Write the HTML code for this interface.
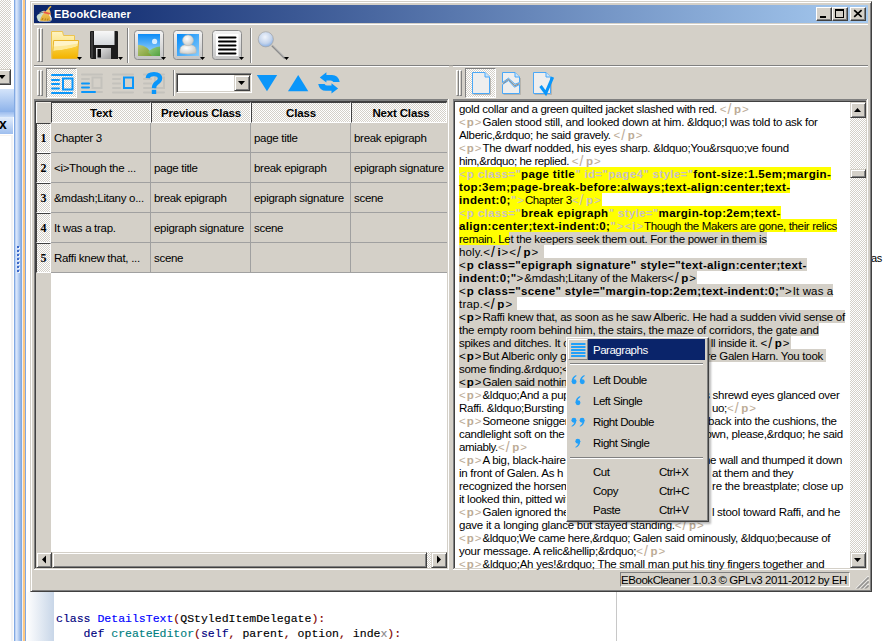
<!DOCTYPE html>
<html><head><meta charset="utf-8">
<style>
*{box-sizing:border-box}
html,body{margin:0;padding:0;background:#fff}
#root{position:relative;width:883px;height:641px;overflow:hidden;background:#fff;font-family:"Liberation Sans",sans-serif;font-size:11px;color:#000}
.a{position:absolute}
.bg{background:#d4d0c8}
.dith{background:repeating-conic-gradient(#d4d0c8 0 25%,#fff 0 50%) 0 0/2px 2px}
.rz{border-style:solid;border-width:1px;border-color:#fff #404040 #404040 #fff;box-shadow:inset -1px -1px 0 #808080;background:#d4d0c8}
.rz2{border-style:solid;border-width:1px;border-color:#d4d0c8 #404040 #404040 #d4d0c8;box-shadow:inset 1px 1px 0 #fff,inset -1px -1px 0 #808080;background:#d4d0c8}
.snk{border-style:solid;border-width:1px;border-color:#808080 #fff #fff #808080;box-shadow:inset 1px 1px 0 #404040,inset -1px -1px 0 #d4d0c8}
.hnd{width:3px;border-style:solid;border-width:1px;border-color:#fff #808080 #808080 #fff}
.sepv{width:2px;border-left:1px solid #808080;border-right:1px solid #fff}
.tx{white-space:pre;line-height:13px;font-size:11.5px}
.sn,.sb,.sw,.swb,.sy,.syb,.sg,.sgb{}
.sb,.swb,.syb,.sgb{font-weight:bold}
.sw,.swb{color:#bcab96}
.sy,.syb{color:#c8c0c8}
.tx{height:13px}
.te{font-size:11.5px}
</style></head><body>
<div id="root">

<!-- ============ LEFT STRIP (behind) ============ -->
<div class="a dith" style="left:0;top:0;width:11px;height:69px"></div>
<div class="a" style="left:0;top:69px;width:11px;height:16px;border-style:solid;border-width:1px 1px 1px 0;border-color:#d4d0c8 #404040 #404040 #d4d0c8;box-shadow:inset 0 1px 0 #fff,inset -1px -1px 0 #808080;background:#d4d0c8"></div>
<svg class="a" style="left:0;top:74px" width="8" height="6"><path d="M-1.5 1H5.5L2 5Z" fill="#000"/></svg>
<div class="a" style="left:0;top:89px;width:15px;height:23px;background:linear-gradient(#d4e4fa,#8cb2ea)"></div>
<div class="a" style="left:0;top:112px;width:15px;height:5px;background:linear-gradient(#9cbcee,#c8dcf8)"></div>
<div class="a" style="left:0;top:117px;width:14px;height:17px;background:linear-gradient(#e4eefc,#9ebeee);border-right:1px solid #fff"></div>
<div class="a" style="left:-1px;top:116px;font-weight:bold;font-size:14px;line-height:16px">x</div>
<div class="a" style="left:11px;top:136px;width:2px;height:505px;background:#f3f3f3"></div><div class="a" style="left:0;top:135px;width:13px;height:1px;background:#f8f4f0"></div>
<!-- blue vertical bar -->
<div class="a" style="left:14px;top:0;width:8px;height:641px;background:linear-gradient(90deg,#80a8e2 0,#80a8e2 6%,#dce8fc 25%,#d0e0f8 40%,#80a8e2 94%)"></div><div class="a" style="left:22px;top:0;width:1px;height:641px;background:#f4f0ec"></div>
<div class="a" style="left:23px;top:0;width:2px;height:641px;background:#fcc884"></div>
<div class="a" style="left:25px;top:0;width:1px;height:641px;background:#80a8e2"></div>
<!-- grip dots -->
<div class="a" style="left:17px;top:246px;width:2px;height:2px;background:#3c68c8;box-shadow:1px 1px 0 #f0f4fc"></div><div class="a" style="left:17px;top:250px;width:2px;height:2px;background:#3c68c8;box-shadow:1px 1px 0 #f0f4fc"></div><div class="a" style="left:17px;top:254px;width:2px;height:2px;background:#3c68c8;box-shadow:1px 1px 0 #f0f4fc"></div><div class="a" style="left:17px;top:258px;width:2px;height:2px;background:#3c68c8;box-shadow:1px 1px 0 #f0f4fc"></div><div class="a" style="left:17px;top:262px;width:2px;height:2px;background:#3c68c8;box-shadow:1px 1px 0 #f0f4fc"></div><div class="a" style="left:17px;top:266px;width:2px;height:2px;background:#3c68c8;box-shadow:1px 1px 0 #f0f4fc"></div><div class="a" style="left:17px;top:270px;width:2px;height:2px;background:#3c68c8;box-shadow:1px 1px 0 #f0f4fc"></div>
<!-- bottom gradient under window -->
<div class="a" style="left:26px;top:592px;width:28px;height:49px;background:linear-gradient(90deg,#fff,#c8d6e8)"></div>
<div class="a" style="left:616px;top:592px;width:1px;height:49px;background:#c8c8c8"></div>

<!-- code -->
<div class="a" style="left:56px;top:611px;font-family:'Liberation Mono',monospace;font-size:11.5px;line-height:15px;white-space:pre;-webkit-text-stroke:0.15px currentColor"><span style="color:#000080">class</span> <span style="color:#0000ff">DetailsText</span><span style="color:#800000">(</span>QStyledItemDelegate<span style="color:#800000">):</span>
    <span style="color:#000080">def</span> <span style="color:#008080">createEditor</span><span style="color:#800000">(</span><span style="color:#000080">self</span><span style="color:#800000">,</span> parent<span style="color:#800000">,</span> option<span style="color:#800000">,</span> inde<span style="color:#888">x</span><span style="color:#800000">):</span></div>
<div class="a" style="left:871px;top:252px;font-size:11px;line-height:13px;letter-spacing:-0.3px">as</div>

<!-- ============ WINDOW ============ -->
<div id="win" class="a" style="left:30px;top:1px;width:842px;height:591px;background:#d4d0c8;border-style:solid;border-width:1px;border-color:#d4d0c8 #404040 #404040 #d4d0c8;box-shadow:inset 1px 1px 0 #fff,inset -1px -1px 0 #808080"></div>

<!-- title bar -->
<div class="a" style="left:34px;top:5px;width:834px;height:18px;background:linear-gradient(90deg,#0a246a,#a6caf0)"></div>
<div class="a" style="left:54px;top:5px;color:#fff;font-weight:bold;font-size:11px;line-height:19px;letter-spacing:0.15px">EBookCleaner</div>
<!-- TITLEICON -->
<svg class="a" style="left:34px;top:4px" width="20" height="20"><defs><linearGradient id="brm" x1="0" y1="0" x2="0" y2="1"><stop offset="0" stop-color="#f4d27a"/><stop offset="1" stop-color="#e0a628"/></linearGradient></defs>
<path d="M3 14C2 12 4 10 6 9.5C7 7.5 9 6.5 11 7L10 17H4Z" fill="#c8dcd0"/>
<path d="M5.5 9.5C6.5 8.5 8 8 9 8.5" stroke="#788880" stroke-width="1.2" fill="none"/>
<path d="M14.5 4.5C12 6.5 8.5 10 7 13.5L6 16.5C7.5 17.5 8.5 17 9.5 17.5C12 17.5 15 17 17 16.5L16.5 9C16.5 7 15.5 5.5 14.5 4.5Z" fill="url(#brm)"/>
<path d="M9.5 8.2L16.5 10" stroke="#e85848" stroke-width="1.8"/>
<path d="M14.2 5L17 2.2" stroke="#e0b040" stroke-width="1.6"/>
<path d="M15.5 10.5C16.5 12 17.5 14 17 16.5" stroke="#f0f4f8" stroke-width="1.2" fill="none"/>
<path d="M5 17.3H16.5" stroke="#c8d0e0" stroke-width="0.8"/>
<path d="M8 16L9 14M11 16.5L11.5 14.5M13.5 16.5L14 14.5" stroke="#a07018" stroke-width="0.8"/>
</svg>
<!-- title buttons -->
<div class="a rz" style="left:816px;top:7px;width:16px;height:14px"></div>
<div class="a" style="left:820px;top:16px;width:6px;height:2px;background:#000"></div>
<div class="a rz" style="left:832px;top:7px;width:16px;height:14px"></div>
<div class="a" style="left:835px;top:9px;width:9px;height:9px;border:1px solid #000;border-top-width:2px"></div>
<div class="a rz" style="left:850px;top:7px;width:16px;height:14px"></div>
<svg class="a" style="left:850px;top:7px" width="16" height="14"><path d="M4.2 3.2L11.6 9.9M11.6 3.2L4.2 9.9" stroke="#000" stroke-width="1.7"/></svg>

<!-- toolbar area -->
<div class="a" style="left:34px;top:24px;width:834px;height:1px;background:#fff"></div>
<div class="a" style="left:34px;top:65px;width:834px;height:1px;background:#808080"></div>
<div class="a" style="left:34px;top:66px;width:834px;height:1px;background:#fff"></div><div class="a" style="left:449px;top:66px;width:4px;height:1px;background:#d4d0c8"></div><div class="a" style="left:449px;top:65px;width:4px;height:1px;background:#9c9a96"></div>

<!-- TOOLBAR1 -->
<div class="a hnd" style="left:37px;top:28px;height:34px"></div>
<div class="a hnd" style="left:40px;top:28px;height:34px"></div>
<div class="a sepv" style="left:127px;top:28px;height:35px"></div>
<div class="a sepv" style="left:250px;top:28px;height:35px"></div>
<svg class="a" style="left:0;top:0" width="300" height="66">
<defs>
<linearGradient id="fb" x1="0" y1="0" x2="0" y2="1"><stop offset="0" stop-color="#fff4c0"/><stop offset="1" stop-color="#f6d24a"/></linearGradient>
<linearGradient id="ff" x1="0" y1="0" x2="0" y2="1"><stop offset="0" stop-color="#fff6c8"/><stop offset="0.45" stop-color="#fbe07a"/><stop offset="0.5" stop-color="#f8cc30"/><stop offset="1" stop-color="#f6b60a"/></linearGradient>
<linearGradient id="ff2" x1="0" y1="0" x2="0" y2="1"><stop offset="0" stop-color="#fad040"/><stop offset="1" stop-color="#f4b400"/></linearGradient>
<linearGradient id="fl" x1="0" y1="0" x2="0" y2="1"><stop offset="0" stop-color="#f8f8f8"/><stop offset="1" stop-color="#d4d8dc"/></linearGradient>
<linearGradient id="sh" x1="0" y1="0" x2="1" y2="1"><stop offset="0" stop-color="#e8e8e8"/><stop offset="1" stop-color="#9c9c9c"/></linearGradient>
<linearGradient id="fr" x1="0" y1="0" x2="0" y2="1"><stop offset="0" stop-color="#f4f4f4"/><stop offset="1" stop-color="#c4c4c4"/></linearGradient>
<linearGradient id="sky" x1="0" y1="0" x2="0" y2="1"><stop offset="0" stop-color="#0a8cf8"/><stop offset="1" stop-color="#b4dcf8"/></linearGradient>
<linearGradient id="hill1" x1="0" y1="0" x2="1" y2="1"><stop offset="0" stop-color="#b8c878"/><stop offset="1" stop-color="#789c30"/></linearGradient>
<linearGradient id="hill2" x1="0" y1="0" x2="1" y2="1"><stop offset="0" stop-color="#9cd080"/><stop offset="1" stop-color="#50a040"/></linearGradient>
<linearGradient id="pbl" x1="0" y1="0" x2="1" y2="1"><stop offset="0" stop-color="#0088f8"/><stop offset="1" stop-color="#88ccfc"/></linearGradient>
<radialGradient id="hd" cx="0.4" cy="0.35" r="0.7"><stop offset="0" stop-color="#ffffff"/><stop offset="1" stop-color="#c8c8c4"/></radialGradient>
<radialGradient id="lens" cx="0.45" cy="0.35" r="0.7"><stop offset="0" stop-color="#f0f4fc"/><stop offset="0.6" stop-color="#c4d4ec"/><stop offset="1" stop-color="#7ca8e4"/></radialGradient>
</defs>
<!-- folder -->
<path d="M51.5 31.5H62.5L63.5 35.5H74.5V41H54L52.5 58.5H51.5Z" fill="url(#fb)" stroke="#ecc450"/>
<path d="M53.8 40.5H78.5L77.5 58.5H52.5Z" fill="#f8c21c" stroke="#eab42a"/>
<path d="M54.3 41H78L77.6 46C72 48.5 62 50 53.4 51Z" fill="#fde99a"/>
<path d="M54.3 41H78L77.8 43.5C70 45 62 46 53.7 46.5Z" fill="#fff4c8"/>
<path d="M53 51C62 50 72 48.5 77.6 46L77.5 58H53Z" fill="url(#ff2)"/>
<path d="M77 57H82L79.5 60Z" fill="#000"/>
<!-- floppy -->
<path d="M90 31.5Q90 31 91 31H117Q118 31 118 32V59H92Q90 59 90 57Z" fill="#1c1c1c"/>
<rect x="91" y="32" width="2" height="26" fill="#3a3a3a"/>
<rect x="94" y="31" width="20.5" height="14" fill="url(#fl)"/>
<rect x="96" y="48" width="15" height="11" fill="url(#sh)"/>
<rect x="97.5" y="49" width="3.5" height="8.5" fill="#0c0c0c"/>
<path d="M118 57H123L120.5 60Z" fill="#000"/>
<!-- picture -->
<rect x="134.5" y="30.5" width="29" height="29" rx="3" fill="url(#fr)" stroke="#8c8c8c"/>
<rect x="138" y="34" width="22" height="22" fill="url(#sky)"/>
<circle cx="154.6" cy="41.4" r="2.6" fill="#d8ecfc"/>
<path d="M138 45Q147 44 153 56H138Z" fill="url(#hill1)"/>
<path d="M148 52Q153 47 160 46.5V56H152Z" fill="url(#hill2)"/>
<path d="M161 57H166L163.5 60Z" fill="#000"/>
<!-- person -->
<rect x="173.5" y="30.5" width="29" height="29" rx="3" fill="url(#fr)" stroke="#8c8c8c"/>
<rect x="177" y="34" width="22" height="22" fill="url(#pbl)"/>
<path d="M180 53Q179 46 184 45H192Q197 46 196 53Q188 55 180 53Z" fill="url(#hd)" stroke="#b8b8b4" stroke-width="0.6"/>
<circle cx="188" cy="40.3" r="5.4" fill="url(#hd)" stroke="#bcbcb8" stroke-width="0.6"/>
<path d="M200 57H205L202.5 60Z" fill="#000"/>
<!-- list -->
<rect x="212.5" y="30.5" width="29" height="29" rx="3" fill="url(#fr)" stroke="#8c8c8c"/>
<rect x="216" y="34" width="22.5" height="22" fill="#fff"/>
<g stroke="#000" stroke-width="2" stroke-linecap="round"><path d="M219 37.5H235.5M219 41.5H235.5M219 45.5H235.5M219 49.5H235.5M219 53.5H235.5"/></g>
<path d="M239 57H244L241.5 60Z" fill="#000"/>
<!-- magnifier -->
<path d="M272 45.5L285 58.5" stroke="#8c8c8c" stroke-width="2"/><path d="M272.5 45L285.5 58" stroke="#e0e0e0" stroke-width="0.7"/>
<circle cx="265.8" cy="39.3" r="7.6" fill="url(#lens)" stroke="#a8a8a8" stroke-width="0.8"/>
<path d="M284 57H289L286.5 60Z" fill="#000"/>
</svg>
<!-- TOOLBAR2 -->
<div class="a hnd" style="left:37px;top:70px;height:26px"></div>
<div class="a hnd" style="left:40px;top:70px;height:26px"></div>
<div class="a dith" style="left:46px;top:68px;width:31px;height:30px;border-style:solid;border-width:1px;border-color:#808080 #fff #fff #808080"></div>
<div class="a sepv" style="left:173px;top:70px;height:26px"></div>
<div class="a snk" style="left:176px;top:73px;width:76px;height:20px;background:#fff"></div>
<div class="a rz2" style="left:234px;top:75px;width:16px;height:16px"></div>
<svg class="a" style="left:238px;top:81px" width="8" height="5"><path d="M0 0H7L3.5 4Z" fill="#000"/></svg>
<div class="a hnd" style="left:456px;top:70px;height:26px"></div>
<div class="a hnd" style="left:459px;top:70px;height:26px"></div>
<div class="a dith" style="left:465px;top:68px;width:31px;height:30px;border-style:solid;border-width:1px;border-color:#808080 #fff #fff #808080"></div>
<svg class="a" style="left:0;top:0" width="600" height="100">
<g stroke-linecap="round" stroke-width="2" fill="none">
<!-- icon1 -->
<g stroke="#0a96fa"><path d="M52 75H72M52 80H59M52 84H59M52 88.5H59M52 93H72"/><rect x="63" y="78.5" width="9.5" height="11"/></g>
<!-- icon2 -->
<g stroke="#c4c2bc"><path d="M82 74.5H102M82 79H89M95 92H102"/><rect x="92.5" y="77.5" width="9" height="10.5"/></g>
<g stroke="#0a96fa"><path d="M82 83.5H89M82 87.5H89M82 92H95"/></g>
<!-- icon3 -->
<g stroke="#c4c2bc"><path d="M113 74.5H133M113 79H120M113 83.5H120M113 88H120M113 92.5H133"/></g>
<g stroke="#0a96fa"><rect x="124" y="77.5" width="9" height="10.5"/></g>
<!-- icon4 -->
<g stroke="#c4c2bc"><path d="M144 74.5H164M144 79H151M144 83.5H151M144 88H151M144 92.5H164"/><rect x="155" y="77.5" width="9" height="10.5"/></g>
</g>
<path d="M147.8 78.2C148 75 150.5 74.1 154 74.1C158 74.1 160 76 160 78.6C160 81 158.3 82 156.6 83.1C154.6 84.4 154 85.5 154 88.3" stroke="#0a96fa" stroke-width="4.4" fill="none"/><rect x="151.8" y="89.8" width="4.4" height="4.2" fill="#0a96fa"/>
<!-- arrows -->
<path d="M256.8 75H277.2L267 91.2Z" fill="#0a96fa"/>
<path d="M288 91.2H308.3L298.2 75Z" fill="#0a96fa"/>
<g fill="#0a96fa">
<path d="M319.8 77.4L326.4 72.2V75H332Q338.2 75 339.7 81.9H333.3Q332.5 80.4 330.8 80.4H326.4V82.5Z"/>
<path transform="rotate(180 328.95 82.9)" d="M319.8 77.4L326.4 72.2V75H332Q338.2 75 339.7 81.9H333.3Q332.5 80.4 330.8 80.4H326.4V82.5Z"/>
</g>
<!-- docs -->
<g stroke="#4aa8f8" stroke-width="1">
<path d="M472.5 72.5H485L489.5 77V93.5H472.5Z" fill="#eeeeee"/>
<path d="M485 72.5V77H489.5" fill="#c8e4fc"/>
<path d="M502.5 82.5V72.5H515L519.5 77V82.5L515 84.2L508.5 78.2Z" fill="#eeeeee"/>
<path d="M515 72.5V77H519.5" fill="#c8e4fc"/>
<path d="M502.5 84.5L508.5 80.5L514.5 87.2L519.5 84.5V93.5H502.5Z" fill="#eeeeee"/>
<path d="M533.5 72.5H546L550.5 77V93.5H533.5Z" fill="#eeeeee"/>
<path d="M546 72.5V77H550.5" fill="#c8e4fc"/>
</g>
<path d="M503 83.5L508.5 79.4L514.8 85.8L519.5 83.5" stroke="#808080" stroke-width="0.8" fill="none"/>
<path d="M490.5 78V94.5H473.5M520.5 78V94.5H503.5M551.5 78V94.5H534.5" stroke="#b0aca4" stroke-width="0.8" fill="none"/>
<path d="M540.5 86L545.8 93.2L552.7 77.2" stroke="#0a96fa" stroke-width="3" fill="none"/>
</svg>
<!-- TABLE -->
<!-- table frame -->
<div class="a" style="left:34px;top:99px;width:415px;height:1px;background:#808080"></div>
<div class="a" style="left:34px;top:100px;width:414px;height:1px;background:#808080"></div>
<div class="a" style="left:35px;top:101px;width:412px;height:1px;background:#404040"></div>
<div class="a" style="left:34px;top:99px;width:1px;height:471px;background:#808080"></div>
<div class="a" style="left:35px;top:101px;width:1px;height:467px;background:#404040"></div>
<div class="a" style="left:35px;top:568px;width:413px;height:1px;background:#d4d0c8"></div>
<div class="a" style="left:34px;top:569px;width:415px;height:1px;background:#fff"></div>
<div class="a" style="left:447px;top:100px;width:1px;height:469px;background:#d4d0c8"></div>
<div class="a" style="left:448px;top:99px;width:1px;height:471px;background:#fff"></div>
<div class="a" style="left:36px;top:102px;width:411px;height:450px;background:#fff"></div>
<div class="a" style="left:36px;top:273px;width:15px;height:279px;background:#d4d0c8"></div>
<div class="a" style="left:36px;top:102px;width:15px;height:21px;background:#d4d0c8;border-left:1px solid #fff;border-top:1px solid #f0ece6"></div>
<div class="a dith" style="left:51px;top:102px;width:100px;height:21px;border-style:solid;border-width:1px;border-color:#404040 #fff #fff #404040"></div>
<div class="a" style="left:51px;top:107px;width:100px;text-align:center;font-weight:bold;line-height:13px;font-size:11.5px;letter-spacing:-0.16px">Text</div>
<div class="a dith" style="left:151px;top:102px;width:100px;height:21px;border-style:solid;border-width:1px;border-color:#404040 #fff #fff #404040"></div>
<div class="a" style="left:151px;top:107px;width:100px;text-align:center;font-weight:bold;line-height:13px;font-size:11.5px;letter-spacing:-0.16px">Previous Class</div>
<div class="a dith" style="left:251px;top:102px;width:100px;height:21px;border-style:solid;border-width:1px;border-color:#404040 #fff #fff #404040"></div>
<div class="a" style="left:251px;top:107px;width:100px;text-align:center;font-weight:bold;line-height:13px;font-size:11.5px;letter-spacing:-0.16px">Class</div>
<div class="a dith" style="left:351px;top:102px;width:96px;height:21px;border-style:solid;border-width:1px;border-color:#404040 #fff #fff #404040"></div>
<div class="a" style="left:351px;top:107px;width:100px;text-align:center;font-weight:bold;line-height:13px;font-size:11.5px;letter-spacing:-0.16px">Next Class</div>
<div class="a dith" style="left:36px;top:123px;width:15px;height:30px;border-style:solid;border-width:1px;border-color:#404040 #fff #fff #404040"></div>
<div class="a" style="left:37px;top:132px;width:13px;text-align:center;font-weight:bold;font-family:'Liberation Serif';font-size:12px;line-height:13px">1</div>
<div class="a" style="left:51px;top:123px;width:396px;height:29px;background:#d4d0c8"></div>
<div class="a" style="left:51px;top:152px;width:396px;height:1px;background:#a0a0a0"></div>
<div class="a" style="left:150px;top:123px;width:1px;height:30px;background:#a0a0a0"></div>
<div class="a tx" style="left:54px;top:132px;letter-spacing:-0.3px">Chapter 3</div>
<div class="a" style="left:250px;top:123px;width:1px;height:30px;background:#a0a0a0"></div>
<div class="a" style="left:350px;top:123px;width:1px;height:30px;background:#a0a0a0"></div>
<div class="a tx" style="left:254px;top:132px;letter-spacing:-0.3px">page title</div>
<div class="a tx" style="left:354px;top:132px;letter-spacing:-0.3px">break epigraph</div>
<div class="a dith" style="left:36px;top:153px;width:15px;height:30px;border-style:solid;border-width:1px;border-color:#404040 #fff #fff #404040"></div>
<div class="a" style="left:37px;top:162px;width:13px;text-align:center;font-weight:bold;font-family:'Liberation Serif';font-size:12px;line-height:13px">2</div>
<div class="a" style="left:51px;top:153px;width:396px;height:29px;background:#d4d0c8"></div>
<div class="a" style="left:51px;top:182px;width:396px;height:1px;background:#a0a0a0"></div>
<div class="a" style="left:150px;top:153px;width:1px;height:30px;background:#a0a0a0"></div>
<div class="a tx" style="left:54px;top:162px;letter-spacing:-0.3px">&lt;i&gt;Though the ...</div>
<div class="a" style="left:250px;top:153px;width:1px;height:30px;background:#a0a0a0"></div>
<div class="a tx" style="left:154px;top:162px;letter-spacing:-0.3px">page title</div>
<div class="a" style="left:350px;top:153px;width:1px;height:30px;background:#a0a0a0"></div>
<div class="a tx" style="left:254px;top:162px;letter-spacing:-0.3px">break epigraph</div>
<div class="a tx" style="left:354px;top:162px;letter-spacing:-0.3px">epigraph signature</div>
<div class="a dith" style="left:36px;top:183px;width:15px;height:30px;border-style:solid;border-width:1px;border-color:#404040 #fff #fff #404040"></div>
<div class="a" style="left:37px;top:192px;width:13px;text-align:center;font-weight:bold;font-family:'Liberation Serif';font-size:12px;line-height:13px">3</div>
<div class="a" style="left:51px;top:183px;width:396px;height:29px;background:#d4d0c8"></div>
<div class="a" style="left:51px;top:212px;width:396px;height:1px;background:#a0a0a0"></div>
<div class="a" style="left:150px;top:183px;width:1px;height:30px;background:#a0a0a0"></div>
<div class="a tx" style="left:54px;top:192px;letter-spacing:-0.3px">&amp;mdash;Litany o...</div>
<div class="a" style="left:250px;top:183px;width:1px;height:30px;background:#a0a0a0"></div>
<div class="a tx" style="left:154px;top:192px;letter-spacing:-0.3px">break epigraph</div>
<div class="a" style="left:350px;top:183px;width:1px;height:30px;background:#a0a0a0"></div>
<div class="a tx" style="left:254px;top:192px;letter-spacing:-0.3px">epigraph signature</div>
<div class="a tx" style="left:354px;top:192px;letter-spacing:-0.3px">scene</div>
<div class="a dith" style="left:36px;top:213px;width:15px;height:30px;border-style:solid;border-width:1px;border-color:#404040 #fff #fff #404040"></div>
<div class="a" style="left:37px;top:222px;width:13px;text-align:center;font-weight:bold;font-family:'Liberation Serif';font-size:12px;line-height:13px">4</div>
<div class="a" style="left:51px;top:213px;width:396px;height:29px;background:#d4d0c8"></div>
<div class="a" style="left:51px;top:242px;width:396px;height:1px;background:#a0a0a0"></div>
<div class="a" style="left:150px;top:213px;width:1px;height:30px;background:#a0a0a0"></div>
<div class="a tx" style="left:54px;top:222px;letter-spacing:-0.3px">It was a trap.</div>
<div class="a" style="left:250px;top:213px;width:1px;height:30px;background:#a0a0a0"></div>
<div class="a tx" style="left:154px;top:222px;letter-spacing:-0.3px">epigraph signature</div>
<div class="a" style="left:350px;top:213px;width:1px;height:30px;background:#a0a0a0"></div>
<div class="a tx" style="left:254px;top:222px;letter-spacing:-0.3px">scene</div>
<div class="a dith" style="left:36px;top:243px;width:15px;height:30px;border-style:solid;border-width:1px;border-color:#404040 #fff #fff #404040"></div>
<div class="a" style="left:37px;top:252px;width:13px;text-align:center;font-weight:bold;font-family:'Liberation Serif';font-size:12px;line-height:13px">5</div>
<div class="a" style="left:51px;top:243px;width:396px;height:29px;background:#d4d0c8"></div>
<div class="a" style="left:51px;top:272px;width:396px;height:1px;background:#a0a0a0"></div>
<div class="a" style="left:150px;top:243px;width:1px;height:30px;background:#a0a0a0"></div>
<div class="a tx" style="left:54px;top:252px;letter-spacing:-0.3px">Raffi knew that, ...</div>
<div class="a" style="left:250px;top:243px;width:1px;height:30px;background:#a0a0a0"></div>
<div class="a tx" style="left:154px;top:252px;letter-spacing:-0.3px">scene</div>
<div class="a" style="left:350px;top:243px;width:1px;height:30px;background:#a0a0a0"></div>
<div class="a" style="left:36px;top:552px;width:411px;height:16px;background:#d4d0c8"></div>
<div class="a dith" style="left:427px;top:552px;width:4px;height:16px"></div>
<div class="a rz2" style="left:36px;top:552px;width:16px;height:16px"></div>
<svg class="a" style="left:36px;top:552px" width="16" height="16"><path d="M6 7.5L10 3.5V11.5Z" fill="#000"/></svg>
<div class="a rz2" style="left:52px;top:552px;width:375px;height:16px"></div>
<div class="a rz2" style="left:431px;top:552px;width:16px;height:16px"></div>
<svg class="a" style="left:431px;top:552px" width="16" height="16"><path d="M10 7.5L6 3.5V11.5Z" fill="#000"/></svg>
<!-- TEXTEDIT -->
<!-- text edit frame -->
<div class="a" style="left:453px;top:99px;width:415px;height:1px;background:#808080"></div>
<div class="a" style="left:453px;top:100px;width:414px;height:1px;background:#808080"></div>
<div class="a" style="left:454px;top:101px;width:412px;height:1px;background:#404040"></div>
<div class="a" style="left:453px;top:99px;width:1px;height:471px;background:#808080"></div>
<div class="a" style="left:454px;top:101px;width:1px;height:467px;background:#404040"></div>
<div class="a" style="left:454px;top:568px;width:413px;height:1px;background:#d4d0c8"></div>
<div class="a" style="left:453px;top:569px;width:415px;height:1px;background:#fff"></div>
<div class="a" style="left:866px;top:100px;width:1px;height:469px;background:#d4d0c8"></div>
<div class="a" style="left:867px;top:99px;width:1px;height:471px;background:#fff"></div>
<div class="a" style="left:455px;top:102px;width:395px;height:466px;background:#fff"></div>
<div class="a dith" style="left:850px;top:118px;width:16px;height:434px"></div>
<div class="a rz2" style="left:850px;top:102px;width:16px;height:16px"></div>
<svg class="a" style="left:850px;top:102px" width="16" height="16"><path d="M4 10H11L7.5 6Z" fill="#000"/></svg>
<div class="a rz2" style="left:850px;top:169px;width:16px;height:9px"></div>
<div class="a rz2" style="left:850px;top:552px;width:16px;height:16px"></div>
<svg class="a" style="left:850px;top:552px" width="16" height="16"><path d="M4 6H11L7.5 10Z" fill="#000"/></svg>
<!-- TEXTLINES -->
<div id="L0" class="a tx te" style="left:459px;top:102px;padding-top:1px"><span class="sn" style="letter-spacing:-0.338px">gold collar and a green quilted jacket slashed with red. </span><span class="sw" style="letter-spacing:1.0px">&lt;</span><span class="sw" style="letter-spacing:2.6px;font-size:14px;vertical-align:top;line-height:12px">/</span><span class="swb" style="letter-spacing:1.0px">p</span><span class="sw" style="letter-spacing:1.0px">&gt;</span></div>
<div id="L1" class="a tx te" style="left:459px;top:115px;padding-top:1px"><span class="sw" style="letter-spacing:1.0px">&lt;</span><span class="swb" style="letter-spacing:1.0px">p</span><span class="sw" style="letter-spacing:1.0px">&gt;</span><span class="sn" style="letter-spacing:-0.268px">Galen stood still, and looked down at him. &amp;ldquo;I was told to ask for</span></div>
<div id="L2" class="a tx te" style="left:459px;top:128px;padding-top:1px"><span class="sn" style="letter-spacing:-0.309px">Alberic,&amp;rdquo; he said gravely. </span><span class="sw" style="letter-spacing:1.0px">&lt;</span><span class="sw" style="letter-spacing:2.6px;font-size:14px;vertical-align:top;line-height:12px">/</span><span class="swb" style="letter-spacing:1.0px">p</span><span class="sw" style="letter-spacing:1.0px">&gt;</span></div>
<div id="L3" class="a tx te" style="left:459px;top:141px;padding-top:1px"><span class="sw" style="letter-spacing:1.0px">&lt;</span><span class="swb" style="letter-spacing:1.0px">p</span><span class="sw" style="letter-spacing:1.0px">&gt;</span><span class="sn" style="letter-spacing:-0.261px">The dwarf nodded, his eyes sharp. &amp;ldquo;You&amp;rsquo;ve found</span></div>
<div id="L4" class="a tx te" style="left:459px;top:154px;padding-top:1px"><span class="sn" style="letter-spacing:-0.387px">him,&amp;rdquo; he replied. </span><span class="sw" style="letter-spacing:1.0px">&lt;</span><span class="sw" style="letter-spacing:2.6px;font-size:14px;vertical-align:top;line-height:12px">/</span><span class="swb" style="letter-spacing:1.0px">p</span><span class="sw" style="letter-spacing:1.0px">&gt;</span></div>
<div id="L5" class="a tx te" style="left:459px;top:167px;padding-top:1px;background:#ff0"><span class="sy" style="letter-spacing:1.0px">&lt;</span><span class="syb" style="letter-spacing:0.35px">p class="</span><span class="sb" style="letter-spacing:0.35px">page title</span><span class="syb" style="letter-spacing:0.35px">" id="page4" style="</span><span class="sb" style="letter-spacing:0.35px">font-size:1.5em;margin-</span></div>
<div id="L6" class="a tx te" style="left:459px;top:180px;padding-top:1px;background:#ff0"><span class="sb" style="letter-spacing:0.35px">top:3em;page-break-before:always;text-align:center;text-</span></div>
<div id="L7" class="a tx te" style="left:459px;top:193px;padding-top:1px;background:#ff0"><span class="sb" style="letter-spacing:0.35px">indent:0;</span><span class="syb" style="letter-spacing:1.0px">"</span><span class="sy" style="letter-spacing:1.0px">&gt;</span><span class="sn" style="letter-spacing:-0.395px">Chapter 3</span><span class="sy" style="letter-spacing:1.0px">&lt;</span><span class="sy" style="letter-spacing:2.6px;font-size:14px;vertical-align:top;line-height:12px">/</span><span class="syb" style="letter-spacing:1.0px">p</span><span class="sy" style="letter-spacing:1.0px">&gt;</span></div>
<div id="L8" class="a tx te" style="left:459px;top:206px;padding-top:1px;background:#ff0"><span class="sy" style="letter-spacing:1.0px">&lt;</span><span class="syb" style="letter-spacing:0.35px">p class="</span><span class="sb" style="letter-spacing:0.35px">break epigraph</span><span class="syb" style="letter-spacing:0.35px">" style="</span><span class="sb" style="letter-spacing:0.35px">margin-top:2em;text-</span></div>
<div id="L9" class="a tx te" style="left:459px;top:219px;padding-top:1px;background:#ff0"><span class="sb" style="letter-spacing:0.35px">align:center;text-indent:0;</span><span class="syb" style="letter-spacing:1.0px">"</span><span class="sy" style="letter-spacing:1.0px">&gt;</span><span class="sy" style="letter-spacing:1.0px">&lt;</span><span class="syb" style="letter-spacing:1.0px">i</span><span class="sy" style="letter-spacing:1.0px">&gt;</span><span class="sn" style="letter-spacing:-0.339px">Though the Makers are gone, their relics</span></div>
<div id="L10" class="a tx te" style="left:459px;top:232px;padding-top:1px;background:linear-gradient(90deg,#ff0 0,#ff0 50px,#d4d0c8 50px)"><span class="sn" style="letter-spacing:-0.290px">remain. Le</span><span class="sn" style="letter-spacing:-0.290px">t the keepers seek them out. For the power in them is</span></div>
<div id="L11" class="a tx te" style="left:459px;top:245px;padding-top:1px;background:#d4d0c8"><span class="sn" style="letter-spacing:0.147px">holy.</span><span class="sg" style="letter-spacing:1.0px">&lt;</span><span class="sg" style="letter-spacing:2.6px;font-size:14px;vertical-align:top;line-height:12px">/</span><span class="sgb" style="letter-spacing:1.0px">i</span><span class="sg" style="letter-spacing:1.0px">&gt;</span><span class="sg" style="letter-spacing:1.0px">&lt;</span><span class="sg" style="letter-spacing:2.6px;font-size:14px;vertical-align:top;line-height:12px">/</span><span class="sgb" style="letter-spacing:1.0px">p</span><span class="sg" style="letter-spacing:1.0px">&gt;</span><span class="sg" style="letter-spacing:1.0px"> </span></div>
<div id="L12" class="a tx te" style="left:459px;top:258px;padding-top:1px;background:#d4d0c8"><span class="sg" style="letter-spacing:1.0px">&lt;</span><span class="sgb" style="letter-spacing:0.35px">p class="epigraph signature" style="text-align:center;text-</span></div>
<div id="L13" class="a tx te" style="left:459px;top:271px;padding-top:1px;background:#d4d0c8"><span class="sgb" style="letter-spacing:0.35px">indent:0;"</span><span class="sg" style="letter-spacing:1.0px">&gt;</span><span class="sn" style="letter-spacing:-0.231px">&amp;mdash;Litany of the Makers</span><span class="sg" style="letter-spacing:1.0px">&lt;</span><span class="sg" style="letter-spacing:2.6px;font-size:14px;vertical-align:top;line-height:12px">/</span><span class="sgb" style="letter-spacing:1.0px">p</span><span class="sg" style="letter-spacing:1.0px">&gt;</span></div>
<div id="L14" class="a tx te" style="left:459px;top:284px;padding-top:1px;background:#d4d0c8"><span class="sg" style="letter-spacing:1.0px">&lt;</span><span class="sgb" style="letter-spacing:0.35px">p class="scene" style="margin-top:2em;text-indent:0;"</span><span class="sg" style="letter-spacing:1.0px">&gt;</span><span class="sn" style="letter-spacing:0.109px">It was a</span></div>
<div id="L15" class="a tx te" style="left:459px;top:297px;padding-top:1px;background:#d4d0c8"><span class="sn" style="letter-spacing:0.221px">trap.</span><span class="sg" style="letter-spacing:1.0px">&lt;</span><span class="sg" style="letter-spacing:2.6px;font-size:14px;vertical-align:top;line-height:12px">/</span><span class="sgb" style="letter-spacing:1.0px">p</span><span class="sg" style="letter-spacing:1.0px">&gt;</span><span class="sg" style="letter-spacing:1.0px"> </span></div>
<div id="L16" class="a tx te" style="left:459px;top:310px;padding-top:1px;background:#d4d0c8"><span class="sg" style="letter-spacing:1.0px">&lt;</span><span class="sgb" style="letter-spacing:1.0px">p</span><span class="sg" style="letter-spacing:1.0px">&gt;</span><span class="sn" style="letter-spacing:-0.265px">Raffi knew that, as soon as he saw Alberic. He had a sudden vivid sense of</span></div>
<div id="L17" class="a tx te" style="left:459px;top:323px;padding-top:1px;background:#d4d0c8"><span class="sn" style="letter-spacing:-0.237px">the empty room behind him, the stairs, the maze of corridors, the gate and</span></div>
<div id="L18" class="a tx te" style="left:459px;top:336px;padding-top:1px;background:#d4d0c8"><span class="sn" style="letter-spacing:-0.280px">spikes and ditches. It c</span><span style="display:inline-block;width:142.14px"></span><span class="sn" style="letter-spacing:-0.280px">ll inside it. </span><span class="sg" style="letter-spacing:1.0px">&lt;</span><span class="sg" style="letter-spacing:2.6px;font-size:14px;vertical-align:top;line-height:12px">/</span><span class="sgb" style="letter-spacing:1.0px">p</span><span class="sg" style="letter-spacing:1.0px">&gt;</span></div>
<div id="L19" class="a tx te" style="left:459px;top:349px;padding-top:1px;background:#d4d0c8"><span class="sg" style="letter-spacing:1.0px">&lt;</span><span class="sgb" style="letter-spacing:1.0px">p</span><span class="sg" style="letter-spacing:1.0px">&gt;</span><span class="sn" style="letter-spacing:-0.280px">But Alberic only g</span><span style="display:inline-block;width:140.37px"></span><span class="sn" style="letter-spacing:-0.280px">re Galen Harn. You took </span></div>
<div id="L20" class="a tx te" style="left:459px;top:362px;padding-top:1px;background:#d4d0c8"><span class="sn" style="letter-spacing:-0.280px">some finding.&amp;rdquo;</span><span class="sg" style="letter-spacing:1.0px">&lt;</span><span class="sg" style="letter-spacing:2.6px;font-size:14px;vertical-align:top;line-height:12px">/</span><span class="sgb" style="letter-spacing:1.0px">p</span><span class="sg" style="letter-spacing:1.0px">&gt;</span></div>
<div id="L21" class="a tx te" style="left:459px;top:375px;padding-top:1px;background:#d4d0c8"><span class="sg" style="letter-spacing:1.0px">&lt;</span><span class="sgb" style="letter-spacing:1.0px">p</span><span class="sg" style="letter-spacing:1.0px">&gt;</span><span class="sn" style="letter-spacing:-0.280px">Galen said nothing.</span><span class="sg" style="letter-spacing:1.0px">&lt;</span><span class="sg" style="letter-spacing:2.6px;font-size:14px;vertical-align:top;line-height:12px">/</span><span class="sgb" style="letter-spacing:1.0px">p</span><span class="sg" style="letter-spacing:1.0px">&gt;</span></div>
<div id="L22" class="a tx te" style="left:459px;top:388px;padding-top:1px"><span class="sw" style="letter-spacing:1.0px">&lt;</span><span class="swb" style="letter-spacing:1.0px">p</span><span class="sw" style="letter-spacing:1.0px">&gt;</span><span class="sn" style="letter-spacing:-0.280px">&amp;ldquo;And a pup</span><span style="display:inline-block;width:134.80px"></span><span class="sn" style="letter-spacing:-0.280px">s shrewd eyes glanced over</span></div>
<div id="L23" class="a tx te" style="left:459px;top:401px;padding-top:1px"><span class="sn" style="letter-spacing:-0.280px">Raffi. &amp;ldquo;Bursting</span><span style="display:inline-block;width:148.02px"></span><span class="sn" style="letter-spacing:-0.280px">uo;</span><span class="sw" style="letter-spacing:1.0px">&lt;</span><span class="sw" style="letter-spacing:2.6px;font-size:14px;vertical-align:top;line-height:12px">/</span><span class="swb" style="letter-spacing:1.0px">p</span><span class="sw" style="letter-spacing:1.0px">&gt;</span></div>
<div id="L24" class="a tx te" style="left:459px;top:414px;padding-top:1px"><span class="sw" style="letter-spacing:1.0px">&lt;</span><span class="swb" style="letter-spacing:1.0px">p</span><span class="sw" style="letter-spacing:1.0px">&gt;</span><span class="sn" style="letter-spacing:-0.280px">Someone snigger</span><span style="display:inline-block;width:136.76px"></span><span class="sn" style="letter-spacing:-0.280px"> back into the cushions, the</span></div>
<div id="L25" class="a tx te" style="left:459px;top:427px;padding-top:1px"><span class="sn" style="letter-spacing:-0.280px">candlelight soft on the</span><span style="display:inline-block;width:140.97px"></span><span class="sn" style="letter-spacing:-0.280px">own, please,&amp;rdquo; he said</span></div>
<div id="L26" class="a tx te" style="left:459px;top:440px;padding-top:1px"><span class="sn" style="letter-spacing:-0.381px">amiably.</span><span class="sw" style="letter-spacing:1.0px">&lt;</span><span class="sw" style="letter-spacing:2.6px;font-size:14px;vertical-align:top;line-height:12px">/</span><span class="swb" style="letter-spacing:1.0px">p</span><span class="sw" style="letter-spacing:1.0px">&gt;</span></div>
<div id="L27" class="a tx te" style="left:459px;top:453px;padding-top:1px"><span class="sw" style="letter-spacing:1.0px">&lt;</span><span class="swb" style="letter-spacing:1.0px">p</span><span class="sw" style="letter-spacing:1.0px">&gt;</span><span class="sn" style="letter-spacing:-0.280px">A big, black-haire</span><span style="display:inline-block;width:138.35px"></span><span class="sn" style="letter-spacing:-0.280px">he wall and thumped it down</span></div>
<div id="L28" class="a tx te" style="left:459px;top:466px;padding-top:1px"><span class="sn" style="letter-spacing:-0.280px">in front of Galen. As h</span><span style="display:inline-block;width:148.96px"></span><span class="sn" style="letter-spacing:-0.280px">at them and they</span></div>
<div id="L29" class="a tx te" style="left:459px;top:479px;padding-top:1px"><span class="sn" style="letter-spacing:-0.280px">recognized the horsem</span><span style="display:inline-block;width:142.00px"></span><span class="sn" style="letter-spacing:-0.280px">re the breastplate; close up</span></div>
<div id="L30" class="a tx te" style="left:459px;top:492px;padding-top:1px"><span class="sn" style="letter-spacing:-0.280px">it looked thin, pitted with rust.</span><span class="sw" style="letter-spacing:1.0px">&lt;</span><span class="sw" style="letter-spacing:2.6px;font-size:14px;vertical-align:top;line-height:12px">/</span><span class="swb" style="letter-spacing:1.0px">p</span><span class="sw" style="letter-spacing:1.0px">&gt;</span></div>
<div id="L31" class="a tx te" style="left:459px;top:505px;padding-top:1px"><span class="sw" style="letter-spacing:1.0px">&lt;</span><span class="swb" style="letter-spacing:1.0px">p</span><span class="sw" style="letter-spacing:1.0px">&gt;</span><span class="sn" style="letter-spacing:-0.280px">Galen ignored the</span><span style="display:inline-block;width:142.75px"></span><span class="sn" style="letter-spacing:-0.280px">l stool toward Raffi, and he</span></div>
<div id="L32" class="a tx te" style="left:459px;top:518px;padding-top:1px"><span class="sn" style="letter-spacing:-0.250px">gave it a longing glance but stayed standing.</span><span class="sw" style="letter-spacing:1.0px">&lt;</span><span class="sw" style="letter-spacing:2.6px;font-size:14px;vertical-align:top;line-height:12px">/</span><span class="swb" style="letter-spacing:1.0px">p</span><span class="sw" style="letter-spacing:1.0px">&gt;</span></div>
<div id="L33" class="a tx te" style="left:459px;top:531px;padding-top:1px"><span class="sw" style="letter-spacing:1.0px">&lt;</span><span class="swb" style="letter-spacing:1.0px">p</span><span class="sw" style="letter-spacing:1.0px">&gt;</span><span class="sn" style="letter-spacing:-0.348px">&amp;ldquo;We came here,&amp;rdquo; Galen said ominously, &amp;ldquo;because of</span></div>
<div id="L34" class="a tx te" style="left:459px;top:544px;padding-top:1px"><span class="sn" style="letter-spacing:-0.280px">your message. A relic&amp;hellip;&amp;rdquo;</span><span class="sw" style="letter-spacing:1.0px">&lt;</span><span class="sw" style="letter-spacing:2.6px;font-size:14px;vertical-align:top;line-height:12px">/</span><span class="swb" style="letter-spacing:1.0px">p</span><span class="sw" style="letter-spacing:1.0px">&gt;</span></div>
<div id="L35" class="a tx te" style="left:459px;top:557px;padding-top:1px"><span class="sw" style="letter-spacing:1.0px">&lt;</span><span class="swb" style="letter-spacing:1.0px">p</span><span class="sw" style="letter-spacing:1.0px">&gt;</span><span class="sn" style="letter-spacing:-0.259px">&amp;ldquo;Ah yes!&amp;rdquo; The small man put his tiny fingers together and</span></div>
<!-- /TEXTLINES -->
<!-- STATUS -->
<div class="a" style="left:620px;top:572px;width:230px;height:15px;border-style:solid;border-width:1px;border-color:#808080 #fff #fff #808080"></div>
<div class="a tx" style="left:621px;top:574px;letter-spacing:-0.45px">EBookCleaner 1.0.3 © GPLv3 2011-2012 by EH</div>
<svg class="a" style="left:855px;top:575px" width="14" height="14"><g stroke-width="1"><path d="M13.5 1L1 13.5M13.5 5L5 13.5M13.5 9L9 13.5" stroke="#fff"/><path d="M13.5 2L2 13.5M13.5 3L3 13.5M13.5 6L6 13.5M13.5 7L7 13.5M13.5 10L10 13.5M13.5 11L11 13.5" stroke="#808080"/></g></svg>
<!-- MENU -->
<div class="a" style="left:566px;top:337px;width:143px;height:185px;background:#d4d0c8;border-style:solid;border-width:1px;border-color:#fff #404040 #404040 #fff;box-shadow:inset -1px -1px 0 #808080,2px 2px 2px rgba(0,0,0,0.28)"></div>
<div class="a" style="left:568px;top:339px;width:20px;height:21px;border-style:solid;border-width:1px;border-color:#fff #808080 #808080 #fff"></div>
<div class="a" style="left:588px;top:339px;width:117px;height:21px;background:#0a246a"></div>
<div class="a tx" style="left:593px;top:344px;color:#fff;letter-spacing:-0.48px">Paragraphs</div>
<div class="a" style="left:570px;top:363px;width:133px;height:1px;background:#808080"></div>
<div class="a" style="left:570px;top:364px;width:133px;height:1px;background:#fff"></div>
<div class="a" style="left:570px;top:457px;width:133px;height:1px;background:#808080"></div>
<div class="a" style="left:570px;top:458px;width:133px;height:1px;background:#fff"></div>
<svg class="a" style="left:0;top:0" width="720" height="530"><g fill="#22a0f8"><rect x="571" y="343" width="14.5" height="2" rx="0.6"/><rect x="571" y="346" width="14.5" height="2" rx="0.6"/><rect x="571" y="349" width="14.5" height="2" rx="0.6"/><rect x="571" y="352" width="14.5" height="2" rx="0.6"/><rect x="571" y="355" width="14.5" height="2" rx="0.6"/><circle cx="574.10" cy="381.70" r="2.45"/><path d="M571.65 381.90C571.50 378.60 573.40 376.20 576.20 375.10L576.50 375.90C574.60 377.10 573.60 378.60 573.60 380.60Z"/><circle cx="582.30" cy="381.70" r="2.45"/><path d="M579.85 381.90C579.70 378.60 581.60 376.20 584.40 375.10L584.70 375.90C582.80 377.10 581.80 378.60 581.80 380.60Z"/><circle cx="578.00" cy="402.70" r="2.45"/><path d="M575.55 402.90C575.40 399.60 577.30 397.20 580.10 396.10L580.40 396.90C578.50 398.10 577.50 399.60 577.50 401.60Z"/><g transform="rotate(180 574.00 422.20)"><circle cx="574.10" cy="424.20" r="2.45"/><path d="M571.65 424.40C571.50 421.10 573.40 418.70 576.20 417.60L576.50 418.40C574.60 419.60 573.60 421.10 573.60 423.10Z"/></g><g transform="rotate(180 582.20 422.20)"><circle cx="582.30" cy="424.20" r="2.45"/><path d="M579.85 424.40C579.70 421.10 581.60 418.70 584.40 417.60L584.70 418.40C582.80 419.60 581.80 421.10 581.80 423.10Z"/></g><g transform="rotate(180 577.90 443.20)"><circle cx="578.00" cy="445.20" r="2.45"/><path d="M575.55 445.40C575.40 442.10 577.30 439.70 580.10 438.60L580.40 439.40C578.50 440.60 577.50 442.10 577.50 444.10Z"/></g></g></svg>
<div class="a tx" style="left:593px;top:374px;letter-spacing:-0.47px">Left Double</div>
<div class="a tx" style="left:593px;top:395px;letter-spacing:-0.47px">Left Single</div>
<div class="a tx" style="left:593px;top:416px;letter-spacing:-0.47px">Right Double</div>
<div class="a tx" style="left:593px;top:437px;letter-spacing:-0.47px">Right Single</div>
<div class="a tx" style="left:593px;top:466px;letter-spacing:-0.47px">Cut</div>
<div class="a tx" style="left:593px;top:485px;letter-spacing:-0.47px">Copy</div>
<div class="a tx" style="left:593px;top:504px;letter-spacing:-0.47px">Paste</div>
<div class="a tx" style="left:659px;top:466px;letter-spacing:-0.47px">Ctrl+X</div>
<div class="a tx" style="left:659px;top:485px;letter-spacing:-0.47px">Ctrl+C</div>
<div class="a tx" style="left:659px;top:504px;letter-spacing:-0.47px">Ctrl+V</div>

</div>
</body></html>
